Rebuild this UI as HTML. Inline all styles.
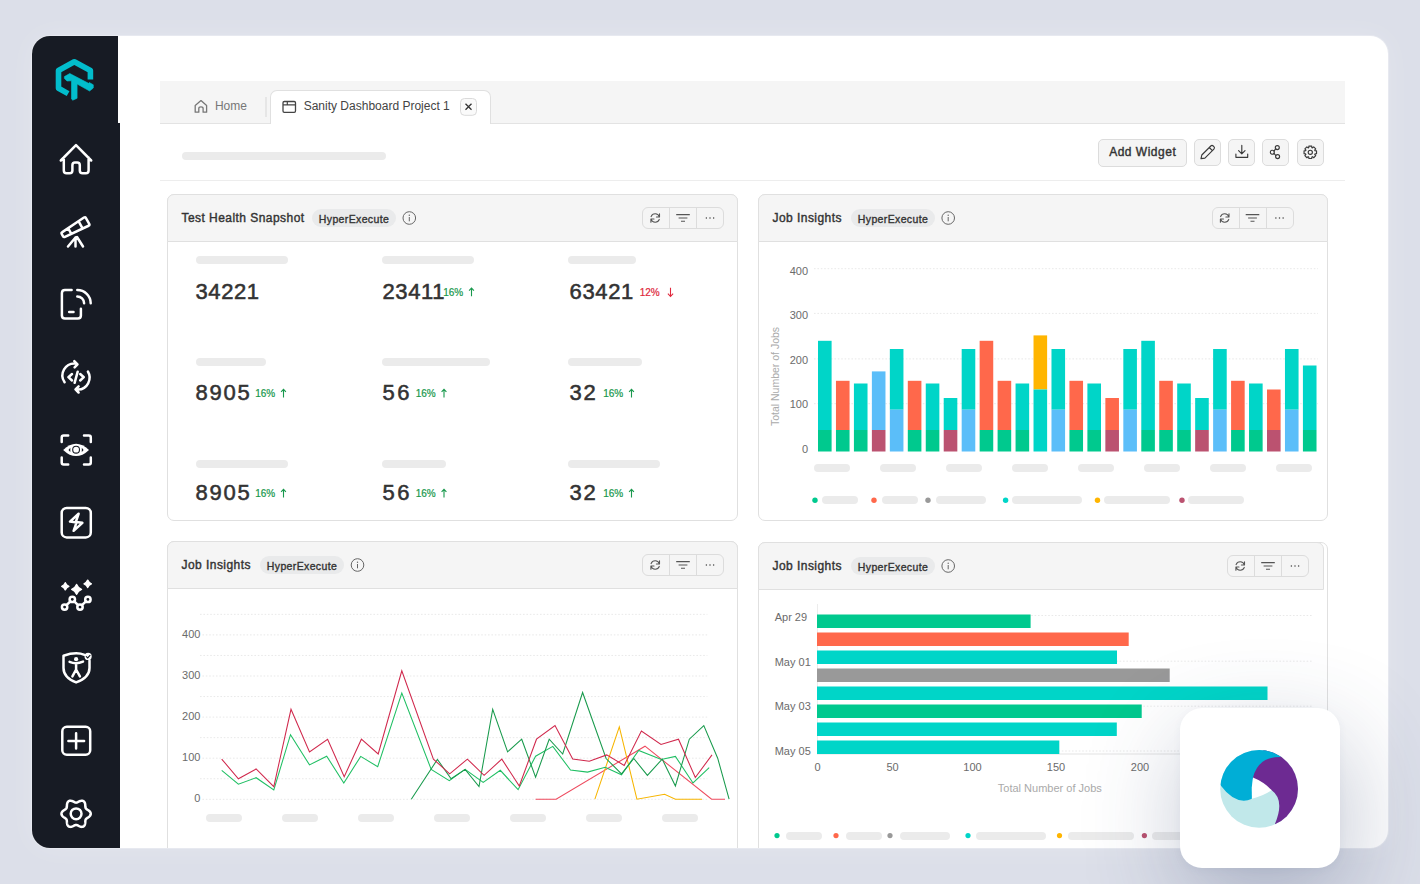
<!DOCTYPE html>
<html><head><meta charset="utf-8">
<style>
*{box-sizing:border-box;margin:0;padding:0}
html,body{width:1420px;height:884px;overflow:hidden}
body{position:relative;background:#dcdfe9;font-family:"Liberation Sans",sans-serif;color:#333}
.t{position:absolute;white-space:nowrap;line-height:1}
.r{position:absolute}
#card{position:absolute;left:32px;top:36px;width:1356px;height:812px;border-radius:18px;overflow:hidden;background:#fff;box-shadow:0 0 0 1px rgba(255,255,255,0.25),0 0 30px rgba(255,255,255,0.22)}
#inner{position:absolute;left:-32px;top:-36px;width:1420px;height:884px}
svg{position:absolute;overflow:visible}
</style></head>
<body>

<div id="card"><div id="inner">
<div class="r" style="left:32px;top:36px;width:88px;height:812px;background:#171b24;border-radius:0px;"></div>
<div class="r" style="left:118px;top:36px;width:2px;height:87px;background:#ffffff;border-radius:0px;"></div>
<svg style="left:0;top:0" width="160" height="884" viewBox="0 0 160 884"><path d="M68.1,93.6 L58.5,88.3 L58.5,70.5 L74.3,61.8 L90.4,70.5 L90.4,79.5" fill="none" stroke="#02bdcc" stroke-width="5.6" stroke-linejoin="round"/><polygon points="69.8,73.5 88.5,83.3 89.3,82.5 93.3,84.8 93.3,88 89.6,91 77.1,84 77.1,98.3 72.8,100.2 71.5,99 71.5,80.8 67,81 64.4,78.5 64.4,76.6" fill="#02bdcc" stroke="#02bdcc" stroke-width="0.6" stroke-linejoin="round"/><path d="M60.8,160.5 L76,145.2 L91.2,160.5 M63.8,157.5 V170.5 Q63.8,173.3 66.6,173.3 H69.6 Q72.4,173.3 72.4,170.5 V165.2 Q72.4,162.6 75,162.6 H77.2 Q79.8,162.6 79.8,165.2 V170.5 Q79.8,173.3 82.6,173.3 H85.8 Q88.6,173.3 88.6,170.5 V157.5" fill="none" stroke="#fff" stroke-width="2.5" stroke-linecap="round" stroke-linejoin="round"/><g transform="translate(63.5,234.2) rotate(-29.5)"><path d="M0,-2.4 L26,-4.4 Q27.5,-4.4 27.5,-3 L27.5,3.6 Q27.5,5 26,5 L0,3 Q-1.4,3 -1.4,1.6 L-1.4,-1 Q-1.4,-2.4 0,-2.4 Z M7,-3 V3.5 M19.5,-4 V4.5" fill="none" stroke="#fff" stroke-width="2.5" stroke-linecap="round" stroke-linejoin="round" stroke-width="2.3"/></g><path d="M75.5,237.5 L68,246.5 M75.5,237.5 V246.5 M77,237 L83,246.5" fill="none" stroke="#fff" stroke-width="2.5" stroke-linecap="round" stroke-linejoin="round" stroke-width="2.3"/><path d="M71.6,289.9 H64.9 Q61.9,289.9 61.9,292.9 V315.6 Q61.9,318.6 64.9,318.6 H77.9 Q80.9,318.6 80.9,315.6 V308.7 M69.2,312 H73.5 M77.3,290 A13.4,13.4 0 0 1 90.7,303.2 M77.3,296.5 A6.8,6.8 0 0 1 84.1,303.2" fill="none" stroke="#fff" stroke-width="2.5" stroke-linecap="round" stroke-linejoin="round"/><path d="M75.5,363.5 A12,12 0 0 0 64.6,382.3 M74.3,361.2 L77.5,364.3 L74.6,367.4 M87.9,371.5 A12,12 0 0 1 78.2,389.6 M78.6,386.4 L75.5,389.4 L78.6,392.5 M72,374 L68.4,377.2 L72,380.5 M77.7,371.7 L74.6,382.8 M80.2,374 L83.8,377.2 L80.2,380.5" fill="none" stroke="#fff" stroke-width="2.5" stroke-linecap="round" stroke-linejoin="round" stroke-width="2.3"/><path d="M61.7,442 V437.4 Q61.7,435.4 63.7,435.4 H68.2 M84,435.4 H88.8 Q90.8,435.4 90.8,437.4 V442 M61.7,457.6 V462.4 Q61.7,464.4 63.7,464.4 H68.2 M84,464.4 H88.8 Q90.8,464.4 90.8,462.4 V457.6" fill="none" stroke="#fff" stroke-width="2.5" stroke-linecap="round" stroke-linejoin="round"/><path d="M63.2,449.9 Q76,437.5 89,449.9 Q76,462.3 63.2,449.9 Z" fill="#fff"/><circle cx="76.1" cy="449.7" r="3.4" fill="none" stroke="#171b24" stroke-width="1.1"/><path d="M68.5,449.9 L70.3,447.8 V452 Z M83.6,449.9 L81.8,447.8 V452 Z" fill="#171b24"/><rect x="61.7" y="508" width="29.1" height="29.4" rx="5" fill="none" stroke="#fff" stroke-width="2.5" stroke-linecap="round" stroke-linejoin="round"/><path d="M78.6,513.8 L70,521.6 L76.6,522.4 L73.6,530.8 L82.4,522.8 L75.8,522 Z" fill="none" stroke="#fff" stroke-width="2.5" stroke-linecap="round" stroke-linejoin="round" stroke-width="2.3"/><path d="M65.3,582.6999999999999 Q66.30799999999999,585.2919999999999 68.89999999999999,586.3 Q66.30799999999999,587.308 65.3,589.9 Q64.292,587.308 61.699999999999996,586.3 Q64.292,585.2919999999999 65.3,582.6999999999999 Z M76.6,584.5 Q77.972,588.028 81.5,589.4 Q77.972,590.7719999999999 76.6,594.3 Q75.228,590.7719999999999 71.69999999999999,589.4 Q75.228,588.028 76.6,584.5 Z M87.7,580.0999999999999 Q88.736,582.764 91.4,583.8 Q88.736,584.8359999999999 87.7,587.5 Q86.664,584.8359999999999 84.0,583.8 Q86.664,582.764 87.7,580.0999999999999 Z" fill="#fff" stroke="#fff" stroke-width="1.4" stroke-linejoin="round"/><path d="M66.5,605.2 L70.4,601.3 M74.2,601.3 L78.1,605.2 M81.9,605.2 L86,601.3" fill="none" stroke="#fff" stroke-width="2.5" stroke-linecap="round" stroke-linejoin="round" stroke-width="2.2"/><circle cx="64.6" cy="607.1" r="2.7" fill="none" stroke="#fff" stroke-width="2.5" stroke-linecap="round" stroke-linejoin="round" stroke-width="2.2"/><circle cx="72.3" cy="599.4" r="2.7" fill="none" stroke="#fff" stroke-width="2.5" stroke-linecap="round" stroke-linejoin="round" stroke-width="2.2"/><circle cx="80" cy="607.1" r="2.7" fill="none" stroke="#fff" stroke-width="2.5" stroke-linecap="round" stroke-linejoin="round" stroke-width="2.2"/><circle cx="87.9" cy="599.4" r="2.7" fill="none" stroke="#fff" stroke-width="2.5" stroke-linecap="round" stroke-linejoin="round" stroke-width="2.2"/><path d="M84.5,654.8 Q76,651.5 63.5,655.7 V668 Q63.5,677.5 76.1,682.4 Q89.5,677.5 89.5,668 V660.5" fill="none" stroke="#fff" stroke-width="2.5" stroke-linecap="round" stroke-linejoin="round" stroke-width="2.3"/><circle cx="88.1" cy="656.4" r="3.6" fill="#fff"/><path d="M86.3,656.6 L87.7,657.9 L90,655.3" fill="none" stroke="#171b24" stroke-width="1.1" stroke-linecap="round"/><circle cx="76.1" cy="659.2" r="2.1" fill="#fff"/><path d="M69.6,661.8 Q76.1,664.6 83,661.6 M76.1,663.6 V669.5 L72.4,676.4 M76.1,669.5 L79.9,676.4" fill="none" stroke="#fff" stroke-width="2.5" stroke-linecap="round" stroke-linejoin="round" stroke-width="2.1"/><rect x="62.3" y="726.8" width="27.9" height="28" rx="4.5" fill="none" stroke="#fff" stroke-width="2.5" stroke-linecap="round" stroke-linejoin="round"/><path d="M68.4,741 H84.1 M76.1,733.2 V748.6" fill="none" stroke="#fff" stroke-width="2.5" stroke-linecap="round" stroke-linejoin="round" stroke-width="2.3"/><path d="M90.75,813.80 L90.70,814.31 L90.56,814.81 L90.34,815.30 L90.03,815.76 L89.67,816.19 L89.25,816.59 L88.79,816.97 L88.32,817.31 L87.85,817.62 L87.40,817.91 L86.97,818.19 L86.59,818.47 L86.26,818.75 L85.98,819.05 L85.76,819.38 L85.59,819.73 L85.47,820.12 L85.39,820.55 L85.34,821.02 L85.31,821.53 L85.28,822.07 L85.25,822.63 L85.19,823.21 L85.09,823.79 L84.95,824.35 L84.76,824.89 L84.51,825.38 L84.21,825.82 L83.84,826.19 L83.42,826.49 L82.96,826.70 L82.46,826.83 L81.92,826.88 L81.37,826.85 L80.81,826.74 L80.25,826.58 L79.71,826.38 L79.18,826.14 L78.67,825.89 L78.19,825.64 L77.73,825.41 L77.30,825.22 L76.89,825.07 L76.49,824.98 L76.10,824.95 L75.71,824.98 L75.31,825.07 L74.90,825.22 L74.47,825.41 L74.01,825.64 L73.53,825.89 L73.02,826.14 L72.49,826.38 L71.95,826.58 L71.39,826.74 L70.83,826.85 L70.28,826.88 L69.74,826.83 L69.24,826.70 L68.77,826.49 L68.36,826.19 L67.99,825.82 L67.69,825.38 L67.44,824.89 L67.25,824.35 L67.11,823.79 L67.01,823.21 L66.95,822.63 L66.92,822.07 L66.89,821.53 L66.86,821.02 L66.81,820.55 L66.73,820.12 L66.61,819.73 L66.44,819.38 L66.22,819.05 L65.94,818.75 L65.61,818.47 L65.23,818.19 L64.80,817.91 L64.35,817.62 L63.88,817.31 L63.41,816.97 L62.95,816.59 L62.53,816.19 L62.17,815.76 L61.86,815.30 L61.64,814.81 L61.50,814.31 L61.45,813.80 L61.50,813.29 L61.64,812.79 L61.86,812.30 L62.17,811.84 L62.53,811.41 L62.95,811.01 L63.41,810.63 L63.88,810.29 L64.35,809.98 L64.80,809.69 L65.23,809.41 L65.61,809.13 L65.94,808.85 L66.22,808.55 L66.44,808.22 L66.61,807.87 L66.73,807.48 L66.81,807.05 L66.86,806.58 L66.89,806.07 L66.92,805.53 L66.95,804.97 L67.01,804.39 L67.11,803.81 L67.25,803.25 L67.44,802.71 L67.69,802.22 L67.99,801.78 L68.36,801.41 L68.77,801.11 L69.24,800.90 L69.74,800.77 L70.28,800.72 L70.83,800.75 L71.39,800.86 L71.95,801.02 L72.49,801.22 L73.02,801.46 L73.53,801.71 L74.01,801.96 L74.47,802.19 L74.90,802.38 L75.31,802.53 L75.71,802.62 L76.10,802.65 L76.49,802.62 L76.89,802.53 L77.30,802.38 L77.73,802.19 L78.19,801.96 L78.67,801.71 L79.18,801.46 L79.71,801.22 L80.25,801.02 L80.81,800.86 L81.37,800.75 L81.92,800.72 L82.46,800.77 L82.96,800.90 L83.42,801.11 L83.84,801.41 L84.21,801.78 L84.51,802.22 L84.76,802.71 L84.95,803.25 L85.09,803.81 L85.19,804.39 L85.25,804.97 L85.28,805.53 L85.31,806.07 L85.34,806.58 L85.39,807.05 L85.47,807.48 L85.59,807.87 L85.76,808.22 L85.98,808.55 L86.26,808.85 L86.59,809.13 L86.97,809.41 L87.40,809.69 L87.85,809.98 L88.32,810.29 L88.79,810.63 L89.25,811.01 L89.67,811.41 L90.03,811.84 L90.34,812.30 L90.56,812.79 L90.70,813.29 L90.75,813.80 Z" fill="none" stroke="#fff" stroke-width="2.5" stroke-linecap="round" stroke-linejoin="round"/><circle cx="76.1" cy="813.8" r="5.4" fill="none" stroke="#fff" stroke-width="2.5" stroke-linecap="round" stroke-linejoin="round"/></svg>
<div class="r" style="left:160px;top:81px;width:1185px;height:43px;background:#f5f5f5;border-radius:0px;border-bottom:1px solid #e3e3e3"></div>
<div class="r" style="left:265px;top:97px;width:2px;height:20px;background:#e6e6e6;border-radius:0px;"></div>
<div class="r" style="left:270px;top:90px;width:221px;height:34px;background:#fff;border-radius:0px;border:1px solid #e0e0e0;border-bottom:none;border-radius:7px 7px 0 0"></div>
<svg style="left:0;top:0" width="1420" height="884" viewBox="0 0 1420 884"><path d="M195.2,112.2 V105.4 L201,100.6 L206.6,105.4 V112.2 H203.1 V108.5 Q203.1,106.9 201,106.9 Q198.8,106.9 198.8,108.5 V112.2 Z" fill="none" stroke="#777" stroke-width="1.3" stroke-linejoin="round"/><rect x="283" y="101.5" width="12.5" height="10.8" rx="1.3" fill="none" stroke="#444" stroke-width="1.3"/><path d="M283,104.8 H295.5 M287.3,101.5 V104.8" stroke="#444" stroke-width="1.2"/><rect x="460.5" y="98.5" width="16" height="16.8" rx="4" fill="#fafafa" stroke="#dadada" stroke-width="1"/><path d="M465.5,103.8 L471.5,109.8 M471.5,103.8 L465.5,109.8" stroke="#333" stroke-width="1.3"/></svg>
<div class="t" style="left:214.90px;top:99.64px;font-size:12px;color:#777;font-weight:400;letter-spacing:0px;">Home</div>
<div class="t" style="left:303.70px;top:99.64px;font-size:12px;color:#444;font-weight:400;letter-spacing:0px;">Sanity Dashboard Project 1</div>
<div class="r" style="left:182px;top:152px;width:204px;height:8px;background:#ebebeb;border-radius:4px;"></div>
<div class="r" style="left:160px;top:180px;width:1185px;height:1px;background:#ededed;border-radius:0px;"></div>
<div class="r" style="left:1098px;top:139px;width:89px;height:28px;background:#f5f5f5;border-radius:5px;border:1px solid #dcdcdc"></div>
<div class="t" style="left:1109.20px;top:145.74px;font-size:12px;color:#333;font-weight:400;letter-spacing:0.5px;-webkit-text-stroke:0.4px #333;">Add Widget</div>
<div class="r" style="left:1194px;top:139px;width:27px;height:27px;background:#f5f5f5;border-radius:5px;border:1px solid #dcdcdc"></div>
<div class="r" style="left:1228px;top:139px;width:27px;height:27px;background:#f5f5f5;border-radius:5px;border:1px solid #dcdcdc"></div>
<div class="r" style="left:1262px;top:139px;width:27px;height:27px;background:#f5f5f5;border-radius:5px;border:1px solid #dcdcdc"></div>
<div class="r" style="left:1296.5px;top:139px;width:27px;height:27px;background:#f5f5f5;border-radius:5px;border:1px solid #dcdcdc"></div>
<svg style="left:0;top:0" width="1420" height="884" viewBox="0 0 1420 884"><path d="M1201,158.6 L1201.8,155 L1210.8,146 Q1212,144.8 1213.2,146 L1213.9,146.7 Q1215.1,147.9 1213.9,149.1 L1204.9,158.1 Z M1209.3,147.5 L1212.4,150.6" fill="none" stroke="#3a3a3a" stroke-width="1.15" stroke-linecap="round" stroke-linejoin="round"/><path d="M1235.9,154 V157.3 H1247.7 V154 M1241.8,145.4 V153.6 M1238.6,150.6 L1241.8,153.8 L1245,150.6" fill="none" stroke="#3a3a3a" stroke-width="1.15" stroke-linecap="round" stroke-linejoin="round"/><circle cx="1277.3" cy="147.6" r="2" fill="none" stroke="#3a3a3a" stroke-width="1.15" stroke-linecap="round" stroke-linejoin="round"/><circle cx="1272.3" cy="152.2" r="2" fill="none" stroke="#3a3a3a" stroke-width="1.15" stroke-linecap="round" stroke-linejoin="round"/><circle cx="1277.6" cy="156.6" r="2" fill="none" stroke="#3a3a3a" stroke-width="1.15" stroke-linecap="round" stroke-linejoin="round"/><path d="M1274,151.1 L1275.6,148.8 M1274,153.4 L1275.8,155.5" fill="none" stroke="#3a3a3a" stroke-width="1.15" stroke-linecap="round" stroke-linejoin="round"/><path d="M1314.95,150.75 L1316.54,150.86 L1316.54,153.74 L1314.95,153.85 L1314.69,154.49 L1315.73,155.69 L1313.69,157.73 L1312.49,156.69 L1311.85,156.95 L1311.74,158.54 L1308.86,158.54 L1308.75,156.95 L1308.11,156.69 L1306.91,157.73 L1304.87,155.69 L1305.91,154.49 L1305.65,153.85 L1304.06,153.74 L1304.06,150.86 L1305.65,150.75 L1305.91,150.11 L1304.87,148.91 L1306.91,146.87 L1308.11,147.91 L1308.75,147.65 L1308.86,146.06 L1311.74,146.06 L1311.85,147.65 L1312.49,147.91 L1313.69,146.87 L1315.73,148.91 L1314.69,150.11 Z" fill="none" stroke="#3a3a3a" stroke-width="1.15" stroke-linecap="round" stroke-linejoin="round"/><circle cx="1310.3" cy="152.3" r="2.1" fill="none" stroke="#3a3a3a" stroke-width="1.15" stroke-linecap="round" stroke-linejoin="round"/></svg>
<div class="r" style="left:167px;top:194px;width:571px;height:327px;background:#fff;border-radius:7px;border:1px solid #e0e0e0"></div>
<div class="r" style="left:167px;top:194px;width:571px;height:48px;background:#f5f5f5;border-radius:0px;border:1px solid #e0e0e0;border-radius:7px 7px 0 0"></div>
<div class="t" style="left:181.50px;top:211.54px;font-size:12px;color:#333;font-weight:400;letter-spacing:0.45px;-webkit-text-stroke:0.4px #333;">Test Health Snapshot</div>
<div class="r" style="left:312px;top:209px;width:84px;height:18px;background:#e9eaeb;border-radius:9px;"></div>
<div class="t" style="left:154.00px;width:400px;text-align:center;top:213.61px;font-size:10.5px;color:#333;font-weight:400;letter-spacing:0.36px;-webkit-text-stroke:0.35px #333;">HyperExecute</div>
<svg style="left:0;top:0" width="1420" height="884" viewBox="0 0 1420 884"><circle cx="409.3" cy="218" r="6.3" fill="none" stroke="#666" stroke-width="1"/><circle cx="409.3" cy="215.2" r="0.7" fill="#666"/><path d="M409.3,217 V221.3" stroke="#666" stroke-width="1"/></svg>
<div class="r" style="left:642px;top:207px;width:82px;height:22px;background:#f5f5f5;border-radius:6px;border:1px solid #dcdcdc"></div>
<div class="r" style="left:669px;top:207px;width:1px;height:22px;background:#dcdcdc;border-radius:0px;"></div>
<div class="r" style="left:696px;top:207px;width:1px;height:22px;background:#dcdcdc;border-radius:0px;"></div>
<svg style="left:0;top:0" width="1420" height="884" viewBox="0 0 1420 884"><path d="M659.4000000000001,216.8 A4.4,4.4 0 0 0 651.1,216.6 M651.0,219.2 A4.4,4.4 0 0 0 659.3000000000001,219.4 M659.5,213.8 V217 H656.4000000000001 M650.9000000000001,222.2 V219 H654.0" fill="none" stroke="#555" stroke-width="1.1" stroke-linecap="round" stroke-linejoin="round"/><path d="M676.2,214.6 H689.8 M678.6,218 H687.4 M681,221.3 H685" stroke="#555" stroke-width="1.1"/><circle cx="706.4" cy="218" r="0.75" fill="#444"/><circle cx="710" cy="218" r="0.75" fill="#444"/><circle cx="713.6" cy="218" r="0.75" fill="#444"/></svg>
<div class="r" style="left:758px;top:194px;width:570px;height:327px;background:#fff;border-radius:7px;border:1px solid #e0e0e0"></div>
<div class="r" style="left:758px;top:194px;width:570px;height:48px;background:#f5f5f5;border-radius:0px;border:1px solid #e0e0e0;border-radius:7px 7px 0 0"></div>
<div class="t" style="left:772.50px;top:211.54px;font-size:12px;color:#333;font-weight:400;letter-spacing:0.45px;-webkit-text-stroke:0.4px #333;">Job Insights</div>
<div class="r" style="left:851px;top:209px;width:84px;height:18px;background:#e9eaeb;border-radius:9px;"></div>
<div class="t" style="left:693.00px;width:400px;text-align:center;top:213.61px;font-size:10.5px;color:#333;font-weight:400;letter-spacing:0.36px;-webkit-text-stroke:0.35px #333;">HyperExecute</div>
<svg style="left:0;top:0" width="1420" height="884" viewBox="0 0 1420 884"><circle cx="948.2" cy="218" r="6.3" fill="none" stroke="#666" stroke-width="1"/><circle cx="948.2" cy="215.2" r="0.7" fill="#666"/><path d="M948.2,217 V221.3" stroke="#666" stroke-width="1"/></svg>
<div class="r" style="left:1211.5px;top:207px;width:82px;height:22px;background:#f5f5f5;border-radius:6px;border:1px solid #dcdcdc"></div>
<div class="r" style="left:1238.5px;top:207px;width:1px;height:22px;background:#dcdcdc;border-radius:0px;"></div>
<div class="r" style="left:1265.5px;top:207px;width:1px;height:22px;background:#dcdcdc;border-radius:0px;"></div>
<svg style="left:0;top:0" width="1420" height="884" viewBox="0 0 1420 884"><path d="M1228.9,216.8 A4.4,4.4 0 0 0 1220.6000000000001,216.6 M1220.5,219.2 A4.4,4.4 0 0 0 1228.8,219.4 M1229.0,213.8 V217 H1225.9 M1220.4,222.2 V219 H1223.5" fill="none" stroke="#555" stroke-width="1.1" stroke-linecap="round" stroke-linejoin="round"/><path d="M1245.7,214.6 H1259.3 M1248.1,218 H1256.9 M1250.5,221.3 H1254.5" stroke="#555" stroke-width="1.1"/><circle cx="1275.9" cy="218" r="0.75" fill="#444"/><circle cx="1279.5" cy="218" r="0.75" fill="#444"/><circle cx="1283.1" cy="218" r="0.75" fill="#444"/></svg>
<div class="r" style="left:167px;top:541px;width:571px;height:400px;background:#fff;border-radius:7px;border:1px solid #e0e0e0"></div>
<div class="r" style="left:167px;top:541px;width:571px;height:48px;background:#f5f5f5;border-radius:0px;border:1px solid #e0e0e0;border-radius:7px 7px 0 0"></div>
<div class="t" style="left:181.50px;top:558.54px;font-size:12px;color:#333;font-weight:400;letter-spacing:0.45px;-webkit-text-stroke:0.4px #333;">Job Insights</div>
<div class="r" style="left:260px;top:556px;width:84px;height:18px;background:#e9eaeb;border-radius:9px;"></div>
<div class="t" style="left:102.00px;width:400px;text-align:center;top:560.61px;font-size:10.5px;color:#333;font-weight:400;letter-spacing:0.36px;-webkit-text-stroke:0.35px #333;">HyperExecute</div>
<svg style="left:0;top:0" width="1420" height="884" viewBox="0 0 1420 884"><circle cx="357.5" cy="565" r="6.3" fill="none" stroke="#666" stroke-width="1"/><circle cx="357.5" cy="562.2" r="0.7" fill="#666"/><path d="M357.5,564 V568.3" stroke="#666" stroke-width="1"/></svg>
<div class="r" style="left:642px;top:554px;width:82px;height:22px;background:#f5f5f5;border-radius:6px;border:1px solid #dcdcdc"></div>
<div class="r" style="left:669px;top:554px;width:1px;height:22px;background:#dcdcdc;border-radius:0px;"></div>
<div class="r" style="left:696px;top:554px;width:1px;height:22px;background:#dcdcdc;border-radius:0px;"></div>
<svg style="left:0;top:0" width="1420" height="884" viewBox="0 0 1420 884"><path d="M659.4000000000001,563.8 A4.4,4.4 0 0 0 651.1,563.6 M651.0,566.2 A4.4,4.4 0 0 0 659.3000000000001,566.4 M659.5,560.8 V564 H656.4000000000001 M650.9000000000001,569.2 V566 H654.0" fill="none" stroke="#555" stroke-width="1.1" stroke-linecap="round" stroke-linejoin="round"/><path d="M676.2,561.6 H689.8 M678.6,565 H687.4 M681,568.3 H685" stroke="#555" stroke-width="1.1"/><circle cx="706.4" cy="565" r="0.75" fill="#444"/><circle cx="710" cy="565" r="0.75" fill="#444"/><circle cx="713.6" cy="565" r="0.75" fill="#444"/></svg>
<div class="r" style="left:758px;top:542px;width:570px;height:400px;background:#fff;border-radius:7px;border:1px solid #e0e0e0"></div>
<div class="r" style="left:758px;top:542px;width:565.5px;height:48px;background:#f5f5f5;border-radius:0px;border:1px solid #e0e0e0;border-radius:7px 7px 0 0"></div>
<div class="t" style="left:772.50px;top:559.54px;font-size:12px;color:#333;font-weight:400;letter-spacing:0.45px;-webkit-text-stroke:0.4px #333;">Job Insights</div>
<div class="r" style="left:851px;top:557px;width:84px;height:18px;background:#e9eaeb;border-radius:9px;"></div>
<div class="t" style="left:693.00px;width:400px;text-align:center;top:561.61px;font-size:10.5px;color:#333;font-weight:400;letter-spacing:0.36px;-webkit-text-stroke:0.35px #333;">HyperExecute</div>
<svg style="left:0;top:0" width="1420" height="884" viewBox="0 0 1420 884"><circle cx="948.2" cy="566" r="6.3" fill="none" stroke="#666" stroke-width="1"/><circle cx="948.2" cy="563.2" r="0.7" fill="#666"/><path d="M948.2,565 V569.3" stroke="#666" stroke-width="1"/></svg>
<div class="r" style="left:1227px;top:555px;width:82px;height:22px;background:#f5f5f5;border-radius:6px;border:1px solid #dcdcdc"></div>
<div class="r" style="left:1254px;top:555px;width:1px;height:22px;background:#dcdcdc;border-radius:0px;"></div>
<div class="r" style="left:1281px;top:555px;width:1px;height:22px;background:#dcdcdc;border-radius:0px;"></div>
<svg style="left:0;top:0" width="1420" height="884" viewBox="0 0 1420 884"><path d="M1244.4,564.8 A4.4,4.4 0 0 0 1236.1000000000001,564.6 M1236.0,567.2 A4.4,4.4 0 0 0 1244.3,567.4 M1244.5,561.8 V565 H1241.4 M1235.9,570.2 V567 H1239.0" fill="none" stroke="#555" stroke-width="1.1" stroke-linecap="round" stroke-linejoin="round"/><path d="M1261.2,562.6 H1274.8 M1263.6,566 H1272.4 M1266,569.3 H1270" stroke="#555" stroke-width="1.1"/><circle cx="1291.4" cy="566" r="0.75" fill="#444"/><circle cx="1295" cy="566" r="0.75" fill="#444"/><circle cx="1298.6" cy="566" r="0.75" fill="#444"/></svg>
<div class="r" style="left:196px;top:256px;width:92px;height:8px;background:#ebebeb;border-radius:4px;"></div>
<div class="t" style="left:195.50px;top:280.58px;font-size:22px;color:#333;font-weight:400;letter-spacing:0.6px;-webkit-text-stroke:0.55px #333;">34221</div>
<div class="r" style="left:382px;top:256px;width:92px;height:8px;background:#ebebeb;border-radius:4px;"></div>
<div class="t" style="left:382.50px;top:280.58px;font-size:22px;color:#333;font-weight:400;letter-spacing:0.6px;-webkit-text-stroke:0.55px #333;">23411</div>
<div class="r" style="left:568px;top:256px;width:68px;height:8px;background:#ebebeb;border-radius:4px;"></div>
<div class="t" style="left:569.50px;top:280.58px;font-size:22px;color:#333;font-weight:400;letter-spacing:0.65px;-webkit-text-stroke:0.55px #333;">63421</div>
<div class="r" style="left:196px;top:358px;width:70px;height:8px;background:#ebebeb;border-radius:4px;"></div>
<div class="t" style="left:195.50px;top:382.08px;font-size:22px;color:#333;font-weight:400;letter-spacing:1.8px;-webkit-text-stroke:0.55px #333;">8905</div>
<div class="r" style="left:382px;top:358px;width:108px;height:8px;background:#ebebeb;border-radius:4px;"></div>
<div class="t" style="left:382.50px;top:382.08px;font-size:22px;color:#333;font-weight:400;letter-spacing:2.4px;-webkit-text-stroke:0.55px #333;">56</div>
<div class="r" style="left:568px;top:358px;width:74px;height:8px;background:#ebebeb;border-radius:4px;"></div>
<div class="t" style="left:569.50px;top:382.08px;font-size:22px;color:#333;font-weight:400;letter-spacing:1.8px;-webkit-text-stroke:0.55px #333;">32</div>
<div class="r" style="left:196px;top:460px;width:92px;height:8px;background:#ebebeb;border-radius:4px;"></div>
<div class="t" style="left:195.50px;top:482.08px;font-size:22px;color:#333;font-weight:400;letter-spacing:1.8px;-webkit-text-stroke:0.55px #333;">8905</div>
<div class="r" style="left:382px;top:460px;width:64px;height:8px;background:#ebebeb;border-radius:4px;"></div>
<div class="t" style="left:382.50px;top:482.08px;font-size:22px;color:#333;font-weight:400;letter-spacing:2.4px;-webkit-text-stroke:0.55px #333;">56</div>
<div class="r" style="left:568px;top:460px;width:92px;height:8px;background:#ebebeb;border-radius:4px;"></div>
<div class="t" style="left:569.50px;top:482.08px;font-size:22px;color:#333;font-weight:400;letter-spacing:1.8px;-webkit-text-stroke:0.55px #333;">32</div>
<!--pct-->
<div class="t" style="left:443.20px;top:287.84px;font-size:10px;color:#18984c;font-weight:400;letter-spacing:0px;-webkit-text-stroke:0.2px #18984c;">16%</div>
<div class="t" style="left:639.70px;top:287.84px;font-size:10px;color:#e0283c;font-weight:400;letter-spacing:0px;-webkit-text-stroke:0.2px #e0283c;">12%</div>
<div class="t" style="left:255.20px;top:389.04px;font-size:10px;color:#18984c;font-weight:400;letter-spacing:0px;-webkit-text-stroke:0.2px #18984c;">16%</div>
<div class="t" style="left:415.70px;top:389.04px;font-size:10px;color:#18984c;font-weight:400;letter-spacing:0px;-webkit-text-stroke:0.2px #18984c;">16%</div>
<div class="t" style="left:603.20px;top:389.04px;font-size:10px;color:#18984c;font-weight:400;letter-spacing:0px;-webkit-text-stroke:0.2px #18984c;">16%</div>
<div class="t" style="left:255.20px;top:489.04px;font-size:10px;color:#18984c;font-weight:400;letter-spacing:0px;-webkit-text-stroke:0.2px #18984c;">16%</div>
<div class="t" style="left:415.70px;top:489.04px;font-size:10px;color:#18984c;font-weight:400;letter-spacing:0px;-webkit-text-stroke:0.2px #18984c;">16%</div>
<div class="t" style="left:603.20px;top:489.04px;font-size:10px;color:#18984c;font-weight:400;letter-spacing:0px;-webkit-text-stroke:0.2px #18984c;">16%</div>
<svg style="left:0;top:0" width="1420" height="884" viewBox="0 0 1420 884"><path d="M471.5,296.3 V288.1 M469.1,290.7 L471.5,288.1 L473.9,290.7" fill="none" stroke="#18984c" stroke-width="1.1"/><path d="M670.5,287.8 V296.3 M667.9,293.7 L670.5,296.5 L673.1,293.7" fill="none" stroke="#e0283c" stroke-width="1.1"/><path d="M283.5,397.5 V389.3 M281.1,391.9 L283.5,389.3 L285.9,391.9" fill="none" stroke="#18984c" stroke-width="1.1"/><path d="M444.0,397.5 V389.3 M441.6,391.9 L444.0,389.3 L446.4,391.9" fill="none" stroke="#18984c" stroke-width="1.1"/><path d="M631.5,397.5 V389.3 M629.1,391.9 L631.5,389.3 L633.9,391.9" fill="none" stroke="#18984c" stroke-width="1.1"/><path d="M283.5,497.5 V489.3 M281.1,491.9 L283.5,489.3 L285.9,491.9" fill="none" stroke="#18984c" stroke-width="1.1"/><path d="M444.0,497.5 V489.3 M441.6,491.9 L444.0,489.3 L446.4,491.9" fill="none" stroke="#18984c" stroke-width="1.1"/><path d="M631.5,497.5 V489.3 M629.1,491.9 L631.5,489.3 L633.9,491.9" fill="none" stroke="#18984c" stroke-width="1.1"/></svg>
<div class="t" style="left:408.00px;width:400px;text-align:right;top:265.73px;font-size:11px;color:#6b6b6b;font-weight:400;letter-spacing:0px;">400</div>
<div class="t" style="left:408.00px;width:400px;text-align:right;top:310.13px;font-size:11px;color:#6b6b6b;font-weight:400;letter-spacing:0px;">300</div>
<div class="t" style="left:408.00px;width:400px;text-align:right;top:354.93px;font-size:11px;color:#6b6b6b;font-weight:400;letter-spacing:0px;">200</div>
<div class="t" style="left:408.00px;width:400px;text-align:right;top:399.43px;font-size:11px;color:#6b6b6b;font-weight:400;letter-spacing:0px;">100</div>
<div class="t" style="left:408.00px;width:400px;text-align:right;top:443.63px;font-size:11px;color:#6b6b6b;font-weight:400;letter-spacing:0px;">0</div>
<div class="t" style="left:575px;top:371px;width:400px;height:11px;line-height:11px;text-align:center;font-size:10.5px;color:#aaa;transform:rotate(-90deg);transform-origin:200px 5.5px;">Total Number of Jobs</div>
<svg style="left:0;top:0" width="1420" height="884" viewBox="0 0 1420 884"><path d="M814,268.7 H1318" stroke="#e9e9e9" stroke-width="1" stroke-dasharray="1.6,1.8"/><path d="M814,313.4 H1318" stroke="#e9e9e9" stroke-width="1" stroke-dasharray="1.6,1.8"/><path d="M814,358.9 H1318" stroke="#e9e9e9" stroke-width="1" stroke-dasharray="1.6,1.8"/><path d="M814,403.7 H1318" stroke="#e9e9e9" stroke-width="1" stroke-dasharray="1.6,1.8"/><rect x="818.00" y="340.8" width="13.6" height="89.20" fill="#00d5c8"/><rect x="818.00" y="430" width="13.6" height="21.50" fill="#00c98e"/><rect x="835.96" y="380.8" width="13.6" height="49.20" fill="#ff684b"/><rect x="835.96" y="430" width="13.6" height="21.50" fill="#00c98e"/><rect x="853.92" y="383.5" width="13.6" height="46.50" fill="#00d5c8"/><rect x="853.92" y="430" width="13.6" height="21.50" fill="#00c98e"/><rect x="871.88" y="371.4" width="13.6" height="58.60" fill="#5bbef9"/><rect x="871.88" y="430" width="13.6" height="21.50" fill="#bb5270"/><rect x="889.84" y="349" width="13.6" height="60.70" fill="#00d5c8"/><rect x="889.84" y="409.7" width="13.6" height="41.80" fill="#5bbef9"/><rect x="907.80" y="380.8" width="13.6" height="49.20" fill="#ff684b"/><rect x="907.80" y="430" width="13.6" height="21.50" fill="#00c98e"/><rect x="925.76" y="383.5" width="13.6" height="46.50" fill="#00d5c8"/><rect x="925.76" y="430" width="13.6" height="21.50" fill="#00c98e"/><rect x="943.72" y="398" width="13.6" height="32.00" fill="#00d5c8"/><rect x="943.72" y="430" width="13.6" height="21.50" fill="#bb5270"/><rect x="961.68" y="349" width="13.6" height="60.70" fill="#00d5c8"/><rect x="961.68" y="409.7" width="13.6" height="41.80" fill="#5bbef9"/><rect x="979.64" y="340.8" width="13.6" height="89.20" fill="#ff684b"/><rect x="979.64" y="430" width="13.6" height="21.50" fill="#00c98e"/><rect x="997.60" y="380.8" width="13.6" height="49.20" fill="#ff684b"/><rect x="997.60" y="430" width="13.6" height="21.50" fill="#00c98e"/><rect x="1015.56" y="383.5" width="13.6" height="46.50" fill="#00d5c8"/><rect x="1015.56" y="430" width="13.6" height="21.50" fill="#00c98e"/><rect x="1033.52" y="335.4" width="13.6" height="54.10" fill="#ffb500"/><rect x="1033.52" y="389.5" width="13.6" height="62.00" fill="#00d5c8"/><rect x="1051.48" y="349" width="13.6" height="60.70" fill="#00d5c8"/><rect x="1051.48" y="409.7" width="13.6" height="41.80" fill="#5bbef9"/><rect x="1069.44" y="380.8" width="13.6" height="49.20" fill="#ff684b"/><rect x="1069.44" y="430" width="13.6" height="21.50" fill="#00c98e"/><rect x="1087.40" y="383.5" width="13.6" height="46.50" fill="#00d5c8"/><rect x="1087.40" y="430" width="13.6" height="21.50" fill="#00c98e"/><rect x="1105.36" y="398" width="13.6" height="32.00" fill="#ff684b"/><rect x="1105.36" y="430" width="13.6" height="21.50" fill="#bb5270"/><rect x="1123.32" y="349" width="13.6" height="60.70" fill="#00d5c8"/><rect x="1123.32" y="409.7" width="13.6" height="41.80" fill="#5bbef9"/><rect x="1141.28" y="340.8" width="13.6" height="89.20" fill="#00d5c8"/><rect x="1141.28" y="430" width="13.6" height="21.50" fill="#00c98e"/><rect x="1159.24" y="380.8" width="13.6" height="49.20" fill="#ff684b"/><rect x="1159.24" y="430" width="13.6" height="21.50" fill="#00c98e"/><rect x="1177.20" y="383.5" width="13.6" height="46.50" fill="#00d5c8"/><rect x="1177.20" y="430" width="13.6" height="21.50" fill="#00c98e"/><rect x="1195.16" y="398" width="13.6" height="32.00" fill="#00d5c8"/><rect x="1195.16" y="430" width="13.6" height="21.50" fill="#bb5270"/><rect x="1213.12" y="349" width="13.6" height="60.70" fill="#00d5c8"/><rect x="1213.12" y="409.7" width="13.6" height="41.80" fill="#5bbef9"/><rect x="1231.08" y="380.8" width="13.6" height="49.20" fill="#ff684b"/><rect x="1231.08" y="430" width="13.6" height="21.50" fill="#00c98e"/><rect x="1249.04" y="383.5" width="13.6" height="46.50" fill="#00d5c8"/><rect x="1249.04" y="430" width="13.6" height="21.50" fill="#00c98e"/><rect x="1267.00" y="389.5" width="13.6" height="40.50" fill="#ff684b"/><rect x="1267.00" y="430" width="13.6" height="21.50" fill="#bb5270"/><rect x="1284.96" y="349" width="13.6" height="60.70" fill="#00d5c8"/><rect x="1284.96" y="409.7" width="13.6" height="41.80" fill="#5bbef9"/><rect x="1302.92" y="365.5" width="13.6" height="64.50" fill="#00d5c8"/><rect x="1302.92" y="430" width="13.6" height="21.50" fill="#00c98e"/></svg>
<div class="r" style="left:814px;top:464px;width:36px;height:8px;background:#ebebeb;border-radius:4px;"></div>
<div class="r" style="left:880px;top:464px;width:36px;height:8px;background:#ebebeb;border-radius:4px;"></div>
<div class="r" style="left:946px;top:464px;width:36px;height:8px;background:#ebebeb;border-radius:4px;"></div>
<div class="r" style="left:1012px;top:464px;width:36px;height:8px;background:#ebebeb;border-radius:4px;"></div>
<div class="r" style="left:1078px;top:464px;width:36px;height:8px;background:#ebebeb;border-radius:4px;"></div>
<div class="r" style="left:1144px;top:464px;width:36px;height:8px;background:#ebebeb;border-radius:4px;"></div>
<div class="r" style="left:1210px;top:464px;width:36px;height:8px;background:#ebebeb;border-radius:4px;"></div>
<div class="r" style="left:1276px;top:464px;width:36px;height:8px;background:#ebebeb;border-radius:4px;"></div>
<div class="r" style="left:822px;top:496px;width:36px;height:8px;background:#ebebeb;border-radius:4px;"></div>
<div class="r" style="left:882px;top:496px;width:36px;height:8px;background:#ebebeb;border-radius:4px;"></div>
<div class="r" style="left:936px;top:496px;width:50px;height:8px;background:#ebebeb;border-radius:4px;"></div>
<div class="r" style="left:1012px;top:496px;width:70px;height:8px;background:#ebebeb;border-radius:4px;"></div>
<div class="r" style="left:1104px;top:496px;width:66px;height:8px;background:#ebebeb;border-radius:4px;"></div>
<div class="r" style="left:1188px;top:496px;width:56px;height:8px;background:#ebebeb;border-radius:4px;"></div>
<svg style="left:0;top:0" width="1420" height="884" viewBox="0 0 1420 884"><circle cx="815" cy="500.3" r="2.7" fill="#00c98e"/><circle cx="874" cy="500.3" r="2.7" fill="#ff684b"/><circle cx="928" cy="500.3" r="2.7" fill="#999999"/><circle cx="1005.6" cy="500.3" r="2.7" fill="#00d5c8"/><circle cx="1097.5" cy="500.3" r="2.7" fill="#ffb500"/><circle cx="1182" cy="500.3" r="2.7" fill="#bb5270"/></svg>
<div class="t" style="left:-199.60px;width:400px;text-align:right;top:629.13px;font-size:11px;color:#6b6b6b;font-weight:400;letter-spacing:0px;">400</div>
<div class="t" style="left:-199.60px;width:400px;text-align:right;top:670.13px;font-size:11px;color:#6b6b6b;font-weight:400;letter-spacing:0px;">300</div>
<div class="t" style="left:-199.60px;width:400px;text-align:right;top:711.13px;font-size:11px;color:#6b6b6b;font-weight:400;letter-spacing:0px;">200</div>
<div class="t" style="left:-199.60px;width:400px;text-align:right;top:752.13px;font-size:11px;color:#6b6b6b;font-weight:400;letter-spacing:0px;">100</div>
<div class="t" style="left:-199.60px;width:400px;text-align:right;top:793.43px;font-size:11px;color:#6b6b6b;font-weight:400;letter-spacing:0px;">0</div>
<svg style="left:0;top:0" width="1420" height="884" viewBox="0 0 1420 884"><path d="M202.4,799.30 H707.4" stroke="#e9e9e9" stroke-width="1" stroke-dasharray="1.6,1.8"/><path d="M200,778.75 H707.4" stroke="#e9e9e9" stroke-width="1" stroke-dasharray="1.6,1.8"/><path d="M202.4,758.20 H707.4" stroke="#e9e9e9" stroke-width="1" stroke-dasharray="1.6,1.8"/><path d="M200,737.65 H707.4" stroke="#e9e9e9" stroke-width="1" stroke-dasharray="1.6,1.8"/><path d="M202.4,717.10 H707.4" stroke="#e9e9e9" stroke-width="1" stroke-dasharray="1.6,1.8"/><path d="M200,696.55 H707.4" stroke="#e9e9e9" stroke-width="1" stroke-dasharray="1.6,1.8"/><path d="M202.4,676.00 H707.4" stroke="#e9e9e9" stroke-width="1" stroke-dasharray="1.6,1.8"/><path d="M200,655.45 H707.4" stroke="#e9e9e9" stroke-width="1" stroke-dasharray="1.6,1.8"/><path d="M202.4,634.90 H707.4" stroke="#e9e9e9" stroke-width="1" stroke-dasharray="1.6,1.8"/><path d="M200,614.35 H707.4" stroke="#e9e9e9" stroke-width="1" stroke-dasharray="1.6,1.8"/><polyline points="535.6,799.2 556.1,799.2 645,746.2 711.6,799.2 725,799.2" fill="none" stroke="#ee4a5e" stroke-width="1.05" stroke-linejoin="miter"/><polyline points="594.9,799.2 619.3,726.9 636.9,799.2 664.6,794.2 675.4,799.2 702,799.2" fill="none" stroke="#f7b500" stroke-width="1.05" stroke-linejoin="miter"/><polyline points="221.7,770.3 238.4,784.2 256.1,777.7 273.8,789.9 290.5,734.7 309.5,764.9 326.7,756.2 343.8,783 360.7,756.4 377.7,766.7 401.8,693.1 431.2,769.4 449.3,780.6 465.1,769.4 483.2,782.4 500.3,770.3 518.1,789.7 535.6,756.2 552.8,746.4 570.5,770 587.5,772.1 605.2,767.2 621.5,774.8 638.7,750.4 661.3,759.4 675.4,756.4 693,783 709.2,767.6" fill="none" stroke="#1fbf63" stroke-width="1.05" stroke-linejoin="miter"/><polyline points="411.3,799.2 437.4,759.4 451.1,778.8 465.1,769.4 479,786.6 492.7,709.3 507.6,751.8 521.7,739.2 535.6,777.2 549.2,739.2 562.7,754 582.6,692.5 606.1,758.5 621.5,773.9 633.8,758.5 647.4,775.4 662.2,759.1 675.4,786 689.3,739.2 703.8,725.6 717.7,758.2 729.1,799.2" fill="none" stroke="#189a4c" stroke-width="1.05" stroke-linejoin="miter"/><polyline points="221.7,759.1 238.4,778.8 256.1,769 273.8,786.6 291,709.3 309.5,751.9 327.6,739.2 344.2,776.7 361.4,739.2 378.2,754 401.8,670.8 433.4,759.1 449.7,773.9 467.4,759.1 484.1,775.4 501.8,759.1 519.3,786 536.5,739.2 555,725.6 572.7,759.1 589.3,761.3 606.7,754.9 624.2,765.4 641.4,731 661,744.4 678.5,739.2 695.3,777.5 712,754.9" fill="none" stroke="#d0284c" stroke-width="1.05" stroke-linejoin="miter"/></svg>
<div class="r" style="left:206px;top:814px;width:36px;height:8px;background:#ebebeb;border-radius:4px;"></div>
<div class="r" style="left:282px;top:814px;width:36px;height:8px;background:#ebebeb;border-radius:4px;"></div>
<div class="r" style="left:358px;top:814px;width:36px;height:8px;background:#ebebeb;border-radius:4px;"></div>
<div class="r" style="left:434px;top:814px;width:36px;height:8px;background:#ebebeb;border-radius:4px;"></div>
<div class="r" style="left:510px;top:814px;width:36px;height:8px;background:#ebebeb;border-radius:4px;"></div>
<div class="r" style="left:586px;top:814px;width:36px;height:8px;background:#ebebeb;border-radius:4px;"></div>
<div class="r" style="left:662px;top:814px;width:36px;height:8px;background:#ebebeb;border-radius:4px;"></div>
<svg style="left:0;top:0" width="1420" height="884" viewBox="0 0 1420 884"><path d="M817,615.5 H1313" stroke="#e9e9e9" stroke-width="1" stroke-dasharray="1.6,1.8"/><path d="M817,661.2 H1313" stroke="#e9e9e9" stroke-width="1" stroke-dasharray="1.6,1.8"/><path d="M817,706.2 H1313" stroke="#e9e9e9" stroke-width="1" stroke-dasharray="1.6,1.8"/><path d="M817,751 H1313" stroke="#e9e9e9" stroke-width="1" stroke-dasharray="1.6,1.8"/><path d="M817.5,604 V754" stroke="#ececec" stroke-width="1"/><path d="M817,754 H1313" stroke="#e3e3e3" stroke-width="1"/><rect x="817" y="614.50" width="213.60" height="13.5" fill="#00c98e"/><rect x="817" y="632.50" width="311.70" height="13.5" fill="#ff684b"/><rect x="817" y="650.50" width="300.00" height="13.5" fill="#00d5c8"/><rect x="817" y="668.50" width="352.70" height="13.5" fill="#999999"/><rect x="817" y="686.50" width="450.50" height="13.5" fill="#00d5c8"/><rect x="817" y="704.50" width="324.70" height="13.5" fill="#00c98e"/><rect x="817" y="722.50" width="299.80" height="13.5" fill="#00d5c8"/><rect x="817" y="740.50" width="242.30" height="13.5" fill="#00d5c8"/></svg>
<div class="t" style="left:774.70px;top:612.43px;font-size:11px;color:#6b6b6b;font-weight:400;letter-spacing:0px;">Apr 29</div>
<div class="t" style="left:774.70px;top:656.63px;font-size:11px;color:#6b6b6b;font-weight:400;letter-spacing:0px;">May 01</div>
<div class="t" style="left:774.70px;top:701.03px;font-size:11px;color:#6b6b6b;font-weight:400;letter-spacing:0px;">May 03</div>
<div class="t" style="left:774.70px;top:745.63px;font-size:11px;color:#6b6b6b;font-weight:400;letter-spacing:0px;">May 05</div>
<div class="t" style="left:617.50px;width:400px;text-align:center;top:762.33px;font-size:11px;color:#6b6b6b;font-weight:400;letter-spacing:0px;">0</div>
<div class="t" style="left:692.50px;width:400px;text-align:center;top:762.33px;font-size:11px;color:#6b6b6b;font-weight:400;letter-spacing:0px;">50</div>
<div class="t" style="left:772.50px;width:400px;text-align:center;top:762.33px;font-size:11px;color:#6b6b6b;font-weight:400;letter-spacing:0px;">100</div>
<div class="t" style="left:856.00px;width:400px;text-align:center;top:762.33px;font-size:11px;color:#6b6b6b;font-weight:400;letter-spacing:0px;">150</div>
<div class="t" style="left:940.00px;width:400px;text-align:center;top:762.33px;font-size:11px;color:#6b6b6b;font-weight:400;letter-spacing:0px;">200</div>
<div class="t" style="left:849.80px;width:400px;text-align:center;top:782.53px;font-size:11px;color:#aaaaaa;font-weight:400;letter-spacing:0px;">Total Number of Jobs</div>
<div class="r" style="left:786px;top:832px;width:36px;height:8px;background:#ebebeb;border-radius:4px;"></div>
<div class="r" style="left:846px;top:832px;width:36px;height:8px;background:#ebebeb;border-radius:4px;"></div>
<div class="r" style="left:900px;top:832px;width:50px;height:8px;background:#ebebeb;border-radius:4px;"></div>
<div class="r" style="left:976px;top:832px;width:70px;height:8px;background:#ebebeb;border-radius:4px;"></div>
<div class="r" style="left:1068px;top:832px;width:66px;height:8px;background:#ebebeb;border-radius:4px;"></div>
<div class="r" style="left:1152.4px;top:832px;width:60px;height:8px;background:#ebebeb;border-radius:4px;"></div>
<svg style="left:0;top:0" width="1420" height="884" viewBox="0 0 1420 884"><circle cx="777" cy="835.6" r="2.6" fill="#00c98e"/><circle cx="836" cy="835.6" r="2.6" fill="#ff684b"/><circle cx="890" cy="835.6" r="2.6" fill="#999999"/><circle cx="968" cy="835.6" r="2.6" fill="#00d5c8"/><circle cx="1059.5" cy="835.6" r="2.6" fill="#ffb500"/><circle cx="1144.4" cy="835.6" r="2.6" fill="#bb5270"/></svg>
</div></div>
<div class="r" style="left:1180px;top:708px;width:160px;height:160px;background:#fff;border-radius:22px;box-shadow:6px 34px 100px 0 rgba(50,65,105,0.31), 0 2px 8px rgba(60,75,115,0.05)"></div>
<svg style="left:0;top:0" width="1420" height="884" viewBox="0 0 1420 884"><defs><clipPath id="lgc"><circle cx="1259.1" cy="788.9" r="38.9"/></clipPath></defs><g clip-path="url(#lgc)"><rect x="1215" y="745" width="90" height="90" fill="#c1e8ea"/><path d="M1270,744 L1300,735 L1325,790 L1300,845 L1277,845 L1275,823.7 Q1285,800 1271.7,790.3 L1251,778 Q1254,757 1270,744 Z" fill="#6d2a92"/><path d="M1212,782 L1212,740 L1260,735 L1286,744 L1280.1,757 Q1258,757 1253,777.6 L1251.9,798.8 Q1236,806 1220.3,785 Z" fill="#00aed6"/><path d="M1253,777.6 Q1264,782 1271.7,790.3 Q1262,796.5 1251.9,798.8 Q1251,788 1253,777.6 Z" fill="#fff"/></g></svg>
</body></html>
